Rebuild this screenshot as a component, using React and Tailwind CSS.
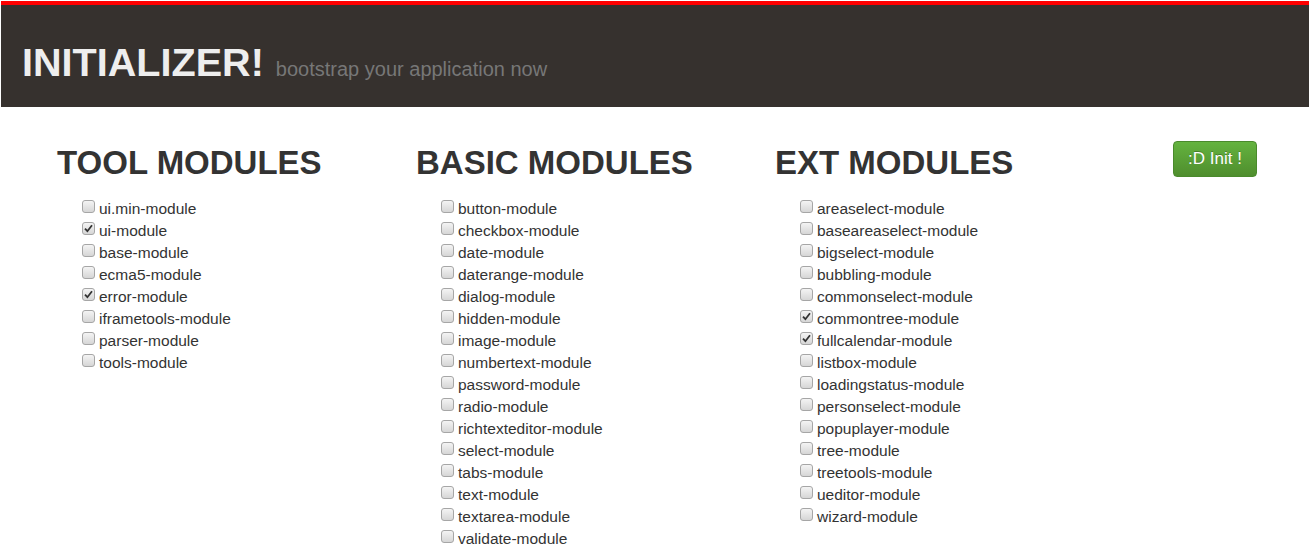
import React from 'react';

const groups = [
    {
        title: 'TOOL MODULES',
        items: [
            ['ui.min-module', false],
            ['ui-module', true],
            ['base-module', false],
            ['ecma5-module', false],
            ['error-module', true],
            ['iframetools-module', false],
            ['parser-module', false],
            ['tools-module', false],
        ],
    },
    {
        title: 'BASIC MODULES',
        items: [
            'button', 'checkbox', 'date', 'daterange', 'dialog', 'hidden', 'image', 'numbertext',
            'password', 'radio', 'richtexteditor', 'select', 'tabs', 'text', 'textarea', 'validate',
        ].map((n) => [n + '-module', false]),
    },
    {
        title: 'EXT MODULES',
        items: [
            ['areaselect-module', false],
            ['baseareaselect-module', false],
            ['bigselect-module', false],
            ['bubbling-module', false],
            ['commonselect-module', false],
            ['commontree-module', true],
            ['fullcalendar-module', true],
            ['listbox-module', false],
            ['loadingstatus-module', false],
            ['personselect-module', false],
            ['popuplayer-module', false],
            ['tree-module', false],
            ['treetools-module', false],
            ['ueditor-module', false],
            ['wizard-module', false],
        ],
    },
];

function Box({ checked }) {
    return (
        <span className="mt-[2px] w-[13px] h-[13px] flex-shrink-0 rounded-[3px] border border-[#a6a6a6] bg-gradient-to-b from-[#f4f4f4] to-[#d6d6d6] flex items-center justify-center">
            {checked && (
                <svg width="9" height="9" viewBox="0 0 9 9">
                    <path d="M1 4.6 L3.4 7.2 L8 1.2" fill="none" stroke="#333" strokeWidth="1.8" />
                </svg>
            )}
        </span>
    );
}

export default function App() {
    return (
        <div className="ml-px mt-px bg-white min-h-[558px]" style={{ fontFamily: '"Liberation Sans", Arial, sans-serif' }}>
            {/* header */}
            <div className="border-t-4 border-[#ff0000] bg-[#36312e] h-[106px] pl-[21px] pt-[37px]">
                <h1 className="flex items-baseline leading-[40px]">
                    <span className="text-[39.6px] font-bold text-[#eeeeee]">INITIALIZER!</span>
                    <span className="ml-[12px] text-[20px] text-[#777777]">bootstrap your application now</span>
                </h1>
            </div>

            {/* modules */}
            <div className="flex pl-[56px] pr-[52px]">
                {groups.map((g) => (
                    <div key={g.title} className="w-[359px] flex-shrink-0">
                        <h2 className="mt-[38px] text-[33px] leading-[36px] font-bold text-[#333333]">{g.title}</h2>
                        <ul className="mt-[17px] pl-[25px]">
                            {g.items.map(([name, checked]) => (
                                <li key={name} className="flex items-start gap-[4px] h-[22px] text-[15.5px] leading-[22px] text-[#333333]">
                                    <Box checked={checked} />
                                    <span>{name}</span>
                                </li>
                            ))}
                        </ul>
                    </div>
                ))}
                <div className="flex-1 flex justify-end pt-[34px]">
                    <button className="h-[36px] w-[84px] rounded-[4px] border border-[#4a8a2c] bg-gradient-to-b from-[#64b33f] to-[#4f8e2e] text-white text-[17px] font-medium [text-shadow:0_-1px_0_rgba(0,0,0,0.25)]">
                        :D Init !
                    </button>
                </div>
            </div>
        </div>
    );
}
